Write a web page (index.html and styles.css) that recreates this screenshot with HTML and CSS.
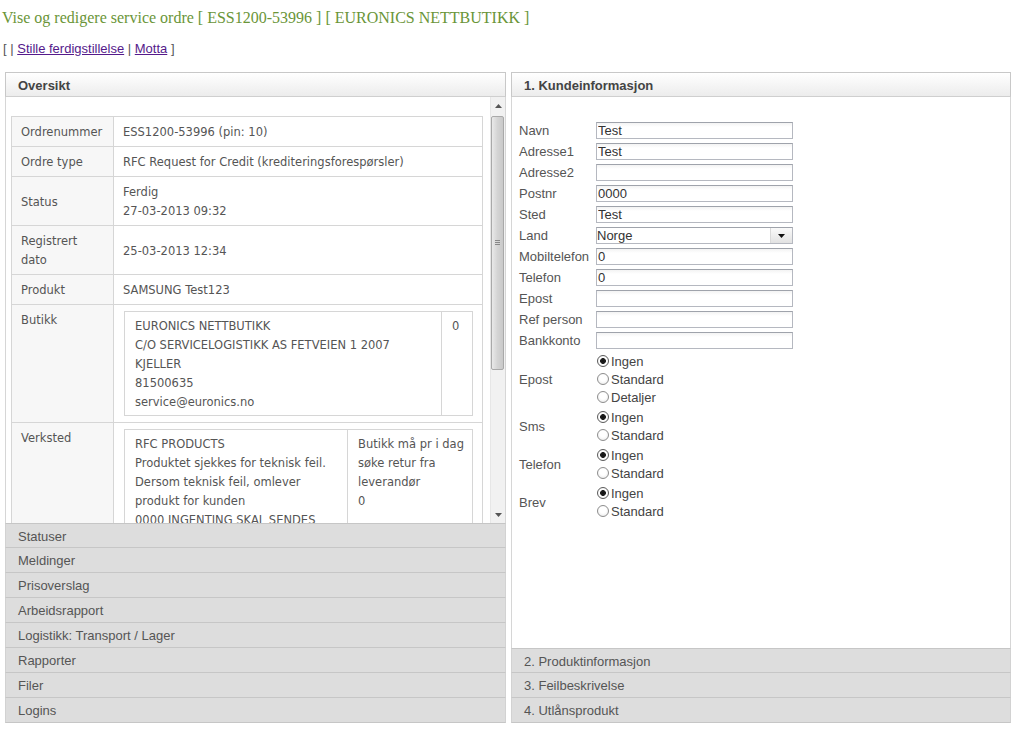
FILE: index.html
```html
<!DOCTYPE html>
<html lang="no">
<head>
<meta charset="utf-8">
<title>Vise og redigere service ordre</title>
<link rel="stylesheet" href="styles.css">
</head>
<body>
<h1 class="title">Vise og redigere service ordre [ ESS1200-53996 ] [ EURONICS NETTBUTIKK ]</h1>
<div class="actions">[ | <a href="#">Stille ferdigstillelse</a> | <a href="#">Motta</a> ]</div>

<div class="panels">
  <section class="panel panel-left">
    <div class="ph">Oversikt</div>
    <div class="pbody">
      <div class="scroll">
        <table class="info">
          <colgroup><col class="c-label"><col></colgroup>
          <tr><th>Ordrenummer</th><td>ESS1200-53996 (pin: 10)</td></tr>
          <tr><th>Ordre type</th><td>RFC Request for Credit (krediteringsforespørsler)</td></tr>
          <tr><th>Status</th><td>Ferdig<br>27-03-2013 09:32</td></tr>
          <tr><th>Registrert dato</th><td>25-03-2013 12:34</td></tr>
          <tr><th>Produkt</th><td>SAMSUNG Test123</td></tr>
          <tr class="top"><th>Butikk</th>
            <td class="holder">
              <table class="nest">
                <colgroup><col class="n1a"><col class="n1b"></colgroup>
                <tr><td>EURONICS NETTBUTIKK<br>C/O SERVICELOGISTIKK AS FETVEIEN 1 2007<br>KJELLER<br>81500635<br>service@euronics.no</td><td>0</td></tr>
              </table>
            </td></tr>
          <tr class="top"><th>Verksted</th>
            <td class="holder">
              <table class="nest">
                <colgroup><col class="n2a"><col class="n2b"></colgroup>
                <tr><td>RFC PRODUCTS<br>Produktet sjekkes for teknisk feil.<br>Dersom teknisk feil, omlever<br>produkt for kunden<br>0000 INGENTING SKAL SENDES</td><td class="nowrap">Butikk må pr i dag<br>søke retur fra<br>leverandør<br>0</td></tr>
              </table>
            </td></tr>
        </table>
      </div>
      <div class="sbar">
        <div class="sb-btn"><svg width="7" height="4" viewBox="0 0 7 4"><path d="M0 4 L3.5 0 L7 4 Z" fill="#555"/></svg></div>
        <div class="sb-track"><div class="sb-thumb"><svg width="5" height="6" viewBox="0 0 5 6"><path d="M0 .5H5M0 2.5H5M0 4.5H5" stroke="#888" stroke-width="1"/></svg></div></div>
        <div class="sb-btn"><svg width="7" height="4" viewBox="0 0 7 4"><path d="M0 0 L3.5 4 L7 0 Z" fill="#555"/></svg></div>
      </div>
    </div>
    <div class="acc">Statuser</div>
    <div class="acc">Meldinger</div>
    <div class="acc">Prisoverslag</div>
    <div class="acc">Arbeidsrapport</div>
    <div class="acc">Logistikk: Transport / Lager</div>
    <div class="acc">Rapporter</div>
    <div class="acc">Filer</div>
    <div class="acc">Logins</div>
  </section>

  <section class="panel panel-right">
    <div class="ph">1. Kundeinformasjon</div>
    <div class="pbody pbody-form">
      <div class="form">
        <label>Navn</label><input class="txt" type="text" value="Test">
        <label>Adresse1</label><input class="txt" type="text" value="Test">
        <label>Adresse2</label><input class="txt" type="text" value="">
        <label>Postnr</label><input class="txt" type="text" value="0000">
        <label>Sted</label><input class="txt" type="text" value="Test">
        <label>Land</label>
        <div class="select"><select><option>Norge</option></select><span class="sel-btn"><svg width="7" height="4" viewBox="0 0 7 4"><path d="M0 0 L3.5 4 L7 0 Z" fill="#111"/></svg></span></div>
        <label>Mobiltelefon</label><input class="txt" type="text" value="0">
        <label>Telefon</label><input class="txt" type="text" value="0">
        <label>Epost</label><input class="txt" type="text" value="">
        <label>Ref person</label><input class="txt" type="text" value="">
        <label>Bankkonto</label><input class="txt" type="text" value="">
      </div>
      <div class="radios">
        <span class="rl">Epost</span>
        <div class="rg">
          <label class="ri"><input type="radio" name="epost" checked>Ingen</label>
          <label class="ri"><input type="radio" name="epost">Standard</label>
          <label class="ri"><input type="radio" name="epost">Detaljer</label>
        </div>
        <span class="rl">Sms</span>
        <div class="rg">
          <label class="ri"><input type="radio" name="sms" checked>Ingen</label>
          <label class="ri"><input type="radio" name="sms">Standard</label>
        </div>
        <span class="rl">Telefon</span>
        <div class="rg">
          <label class="ri"><input type="radio" name="tlf" checked>Ingen</label>
          <label class="ri"><input type="radio" name="tlf">Standard</label>
        </div>
        <span class="rl">Brev</span>
        <div class="rg">
          <label class="ri"><input type="radio" name="brev" checked>Ingen</label>
          <label class="ri"><input type="radio" name="brev">Standard</label>
        </div>
      </div>
    </div>
    <div class="acc">2. Produktinformasjon</div>
    <div class="acc">3. Feilbeskrivelse</div>
    <div class="acc">4. Utlånsprodukt</div>
  </section>
</div>
</body>
</html>
```

FILE: styles.css
```css
html, body {
  margin: 0;
  padding: 0;
  background: #fff;
}
body {
  font-family: "Liberation Sans", Arial, sans-serif;
  color: #555;
}
.title {
  margin: 0;
  padding: 8px 0 0 2px;
  font-family: "Liberation Serif", "Times New Roman", serif;
  font-weight: normal;
  font-size: 16px;
  line-height: 20px;
  color: #6a9538;
}
.actions {
  margin-top: 13px;
  padding-left: 3px;
  font-size: 13px;
  line-height: 16px;
  color: #555;
}
.actions a {
  color: #551a8b;
  text-decoration: underline;
}
.panels {
  display: flex;
  gap: 5px;
  width: 1006px;
  height: 651px;
  margin: 15px 0 0 5px;
}
.panel {
  display: flex;
  flex-direction: column;
}
.panel-left { width: 501px; }
.panel-right { width: 500px; }
.ph {
  height: 23px;
  line-height: 25px;
  padding-left: 12px;
  border: 1px solid #c8c8c8;
  border-bottom-color: #cfcfcf;
  background: linear-gradient(#ffffff, #ececec);
  font-size: 13px;
  font-weight: bold;
  color: #444;
}
.pbody {
  flex: 1;
  min-height: 0;
  display: flex;
  background: #fff;
  border-left: 1px solid #d6d6d6;
  border-right: 1px solid #d6d6d6;
}
.acc {
  height: 24px;
  line-height: 26px;
  padding-left: 12px;
  background: #dddddd;
  border: 1px solid #d2d2d2;
  border-top: none;
  border-bottom-color: #c6c6c6;
  font-size: 13px;
  color: #555;
}
.panel-left .pbody + .acc,
.panel-right .pbody + .acc {
  border-top: 1px solid #c6c6c6;
  height: 23px;
  line-height: 25px;
}

/* left scroll content */
.scroll {
  width: 484px;
  overflow: hidden;
  padding: 19px 0 0 5px;
  box-sizing: border-box;
}
.info {
  width: 472px;
  border-collapse: collapse;
  table-layout: fixed;
  font-family: "DejaVu Sans", Verdana, sans-serif;
  font-size: 11.5px;
  line-height: 19px;
  color: #555;
}
.c-label { width: 102px; }
.info th, .info td {
  border: 1px solid #d6d6d6;
  padding: 6px 10px 4px;
  text-align: left;
  vertical-align: middle;
  font-weight: normal;
}
.info th { background: #f7f7f7; padding-left: 9px; }
.info td { padding-left: 9px; }
.info tr.top th, .info tr.top td { vertical-align: top; }
.info td.holder { padding: 6px 11px 6px 10px; }
.nest {
  width: 348px;
  border-collapse: collapse;
  table-layout: fixed;
}
.nest td {
  border: 1px solid #d6d6d6;
  padding: 5px 10px 3px;
  vertical-align: top;
}
.nest td.nowrap { white-space: nowrap; }
.n1a { width: 317px; }
.n1b { width: 31px; }
.n2a { width: 223px; }
.n2b { width: 125px; }

/* fake scrollbar */
.sbar {
  width: 15px;
  display: flex;
  flex-direction: column;
  background: #f1f1f1;
  border-left: 1px solid #e6e6e6;
  box-sizing: border-box;
}
.sb-btn {
  height: 17px;
  display: flex;
  align-items: center;
  justify-content: center;
}
.sb-track {
  flex: 1;
  padding: 2px 0 0;
}
.sb-thumb {
  height: 254px;
  margin: 0 1px 0 0;
  border: 1px solid #a9a9a9;
  border-radius: 2px;
  background: linear-gradient(90deg, #e9e9e9, #d4d4d4 50%, #c9c9c9);
  box-sizing: border-box;
  display: flex;
  align-items: center;
  justify-content: center;
}

/* right form */
.pbody-form {
  flex-direction: column;
  padding: 25px 0 0 7px;
}
.form {
  display: grid;
  grid-template-columns: 77px 197px;
  row-gap: 4px;
  align-items: center;
}
.form label, .rl {
  font-size: 13px;
  color: #555;
  line-height: 17px;
}
.txt {
  width: 197px;
  height: 17px;
  box-sizing: border-box;
  margin: 0;
  padding: 0 1px;
  border: 1px solid #b5b8c0;
  border-top-color: #9fa3ab;
  background: linear-gradient(#f3f3f3, #ffffff 4px);
  font-family: "Liberation Sans", Arial, sans-serif;
  font-size: 13px;
  color: #333;
  outline: none;
}
.select {
  width: 197px;
  height: 17px;
  box-sizing: border-box;
  display: flex;
  border: 1px solid #b5b8c0;
  border-top-color: #9fa3ab;
  background: #fff;
}
.select select {
  flex: 1;
  appearance: none;
  -webkit-appearance: none;
  border: none;
  margin: 0;
  padding: 0;
  background: transparent;
  font-family: "Liberation Sans", Arial, sans-serif;
  font-size: 13px;
  line-height: 15px;
  color: #333;
  outline: none;
}
.sel-btn {
  width: 21px;
  display: flex;
  align-items: center;
  justify-content: center;
  border-left: 1px solid #d9d9d9;
  background: linear-gradient(#fafafa, #e2e2e2);
}
.radios {
  display: grid;
  grid-template-columns: 77px auto;
  row-gap: 2px;
  align-items: center;
  margin-top: 3px;
}
.rg {
  display: flex;
  flex-direction: column;
}
.ri {
  height: 18px;
  display: flex;
  align-items: center;
  font-size: 13px;
  color: #444;
}
.ri input {
  appearance: none;
  -webkit-appearance: none;
  width: 12px;
  height: 12px;
  margin: 0 2px 0 1px;
  border: 1px solid #8d8d8d;
  border-radius: 50%;
  box-sizing: border-box;
  background: radial-gradient(circle at 50% 40%, #ffffff 40%, #e4e4e4);
}
.ri input:checked {
  border-color: #5a5a5a;
  background: radial-gradient(circle, #111 0, #222 2.6px, #fff 3.2px, #f0f0f0 100%);
}
```
